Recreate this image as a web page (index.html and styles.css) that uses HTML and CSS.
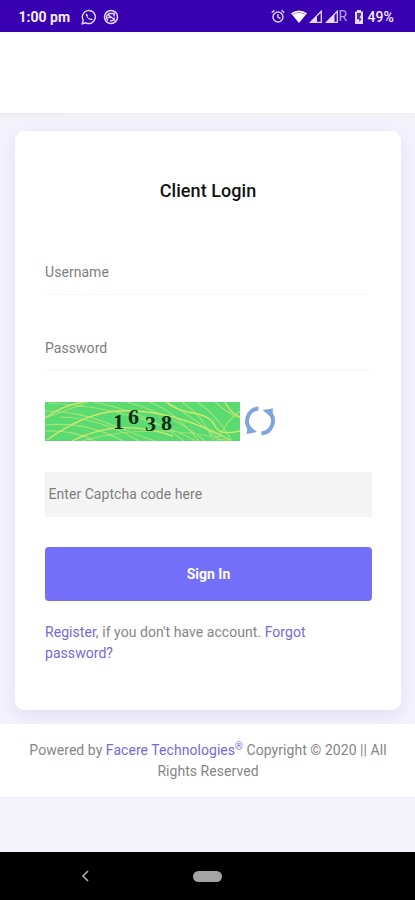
FILE: index.html
```
<!DOCTYPE html>
<html lang="en">
<head>
<meta charset="utf-8">
<meta name="viewport" content="width=device-width, initial-scale=1">
<title>Client Login</title>
<link rel="stylesheet" href="styles.css">
</head>
<body>
<div class="status">
  <span class="time">1:00 pm</span>
  <svg class="whatsapp" width="16" height="16" viewBox="0 0 16 16" fill="none" stroke="#e4d8fa" stroke-width="1.4"><path d="M1.2 14.8 2.2 11.2A6.5 6.5 0 1 1 4.9 13.8Z"/><path d="M5.2 4.2C4 5.500 5.500 8 7 9.500S10.800 12 11.900 10.500L10 9.200 8.900 9.800Q7.200 8.900 6.400 7.300L7 6.200Z" fill="#e4d8fa" stroke="none"/></svg>
  <svg class="sync" width="16" height="16" viewBox="0 0 16 16" fill="none" stroke="#e4d8fa" stroke-width="1.5"><circle cx="8" cy="8" r="6.500"/><path d="M5 11.500A4 4 0 0 1 6 4.600h5v3M11.500 8.500A4 4 0 0 1 7 11.800M4.500 5 12 11.500M4.600 8.500h3"/></svg>
  <svg class="alarm" width="14" height="15" viewBox="0 0 14 15" fill="none" stroke="#dfd2fa" stroke-width="1.4"><circle cx="7" cy="8" r="5"/><path d="M.7 3.700 3.500 1.300M13.300 3.700 10.500 1.300M7 5v3.200l2.500 1.500"/></svg>
  <svg class="wifi" width="16" height="13" viewBox="0 0 16 13"><path d="M0 3.200Q8-2.200 16 3.200L8 13Z" fill="#fff"/><path d="M2 4.300Q8 .8 14 4.300" fill="none" stroke="#8d6bdb" stroke-width=".8"/></svg>
  <svg class="signal" width="13" height="13" viewBox="0 0 13 13"><path d="M1.500 12.300H12.300V1.300Z" fill="none" stroke="#e5dafa" stroke-width="1.300"/><path d="M1 12.500H8V5.500Z" fill="#e5dafa"/></svg>
  <svg class="signal second" width="13" height="13" viewBox="0 0 13 13"><path d="M1.500 12.300H12.300V1.300Z" fill="none" stroke="#e5dafa" stroke-width="1.300"/><path d="M1 12.500H9.500V4Z" fill="#e5dafa"/></svg>
  <span class="roaming">R</span>
  <svg class="battery" width="10" height="14" viewBox="0 0 10 14"><path d="M3 0h4v1.500h2V14H1V1.500h2Z" fill="#e5dafa"/><path d="M3 3h4v2L5.500 8H7v1.500L5.800 12 5 9.300H3Z" fill="#512cb8"/></svg>
  <span class="percent">49%</span>
</div>
<header class="top"></header>
<main class="stage">
  <form class="card">
    <h1>Client Login</h1>
    <input class="line-field" type="text" placeholder="Username" aria-label="Username">
    <input class="line-field second-field" type="password" placeholder="Password" aria-label="Password">
    <div class="captcha-row">
      <svg class="captcha" width="195" height="39" viewBox="0 0 195 39">
        <rect width="195" height="39" fill="#5adb72"/>
        <g fill="none" stroke="#a5e474" stroke-width="1.100">
          <path d="M0 9Q32 9 62 21T110 39M0 23Q42 19 78 39M0 29Q30 28 50 39M3 1Q50 3 90 15T151 39M15 15Q55 16 94 39M48 0Q102 10 139 39M82 0Q128 13 160 39M104 0Q127 7 154 39M122 0Q148 15 177 39M137 0Q157 13 169 39M152 0Q171 12 187 39M170 0Q182 11 195 16M172 39Q182 18 195 9M0 16Q20 9 43 0M37 39Q70 29 110 29T184 39"/>
        </g>
        <g fill="none" stroke="#d2e56c" stroke-width="1.400"><path d="M0 16Q16 4 38 0M2 38Q40 11 72 9Q126 6 185 38M27 39Q72 15 128 34M121 0Q130 8 148 11T170 24 195 29M180 0Q186 12 195 15"/></g>
        <g class="digits"><text x="68" y="27">1</text><text x="83" y="22">6</text><text x="100" y="29">3</text><text x="116" y="28">8</text></g>
      </svg>
      <svg class="refresh" width="30" height="32" viewBox="0 0 30 32"><g fill="none" stroke="#7ea5df" stroke-width="4"><path d="M13.500 3.500A12.500 12.500 0 0 0 6 25"/><path d="M16.500 28.500A12.500 12.500 0 0 0 24 7"/></g><path d="M17.500 5 28 3.500 27 13ZM1.500 29 3 19.500 12 27Z" fill="#7ea5df"/></svg>
    </div>
    <input class="code" type="text" placeholder="Enter Captcha code here" aria-label="Captcha code">
    <button type="button">Sign In</button>
    <p class="help"><a>Register</a>, if you don't have account. <a>Forgot<br>password?</a></p>
  </form>
</main>
<footer>Powered by <a>Facere Technologies<sup>®</sup></a> Copyright © 2020 || All<br>Rights Reserved</footer>
<nav>
  <svg class="back" width="8" height="12" viewBox="0 0 8 12" fill="none" stroke="#aaa" stroke-width="1.700"><path d="M7 1 2 6l5 5"/></svg>
  <span class="home"></span>
</nav>
</body>
</html>
```
FILE: styles.css
```
* { box-sizing: border-box; }
body {
  margin: 0;
  width: 415px;
  height: 900px;
  display: flex;
  flex-direction: column;
  overflow: hidden;
  background: #f4f3fc;
  color: #858585;
  font: 14px/21px Roboto, sans-serif;
}
a { color: #7868d8; text-decoration: none; }
.status {
  height: 32px;
  flex: none;
  display: flex;
  align-items: center;
  padding: 1px 0 0 18.500px;
  background: #3900b1;
  color: #f3edff;
}
.status svg { flex: none; }
.time { width: 62px; padding-top: 1px; font-size: 14px; font-weight: 700; letter-spacing: 0; white-space: nowrap; }
.sync { margin-left: 6px; }
.alarm { margin-left: 152px; }
.wifi { margin-left: 6px; }
.signal { margin-left: 2px; }
.signal.second { margin-left: 3px; }
.roaming { width: 16px; padding-left: 1px; font-size: 14px; color: #b8a2ea; }
.percent { margin-left: 4px; padding-top: 1px; font-size: 14px; font-weight: 500; }
.top {
  height: 81px;
  flex: none;
  background: #fff;
}
.stage {
  height: 611px;
  flex: none;
  padding: 18px 14px 0 15px;
  background:
    linear-gradient(#e7e7ea, #f4f3fc) 0 0 / 63px 5px no-repeat,
    linear-gradient(#f1f1f5, #f4f3fc) 0 0 / 100% 12px no-repeat;
}
.card {
  display: flex;
  flex-direction: column;
  height: 579px;
  padding: 48px 30px 0 30px;
  background: #fff;
  border-radius: 9px;
  box-shadow: 0 6px 20px #e2ddf4;
}
h1 { margin: 0 0 42px; color: #111; font-size: 18px; line-height: 24px; font-weight: 500; text-align: center; letter-spacing: .05px; }
input { font: 14px Roboto, sans-serif; border: 0; border-radius: 0; outline: 0; flex: none; }
input::placeholder { color: #7e7e7e; opacity: 1; }
.line-field { width: 324px; height: 50px; padding: 5px 0 0; border-bottom: 1px solid #f7f7f7; background: transparent; letter-spacing: .05px; }
.second-field { margin-top: 26px; padding-top: 4px; }
.captcha-row { display: flex; gap: 5px; height: 40px; margin-top: 31px; flex: none; }
.refresh { margin-top: 3px; }
.digits { font: bold 22px "Liberation Serif", serif; fill: #102c19; }
.code { width: 327px; height: 45px; margin-top: 30px; padding: 0 4px 2px 3.500px; background: #f4f4f4; letter-spacing: .05px; }
button {
  width: 327px;
  height: 54px;
  flex: none;
  margin: 30px 0 0;
  padding: 0;
  border: 0;
  border-radius: 4px;
  background: #746ff8;
  color: #fff;
  font: 700 14px Roboto, sans-serif;
}
.help { margin: 21px 0 0; white-space: nowrap; letter-spacing: .05px; }
footer { height: 73px; flex: none; padding: 16px 0 0 1px; background: #fff; text-align: center; white-space: nowrap; letter-spacing: .05px; }
sup { font-size: 10px; line-height: 0; vertical-align: 5px; }
nav {
  height: 48px;
  flex: none;
  display: flex;
  align-items: center;
  margin-top: 55px;
  padding-left: 81px;
  background: #000;
}
.home { width: 29px; height: 11px; margin-left: 104px; border-radius: 6px; background: #a4a4a4; }
```
